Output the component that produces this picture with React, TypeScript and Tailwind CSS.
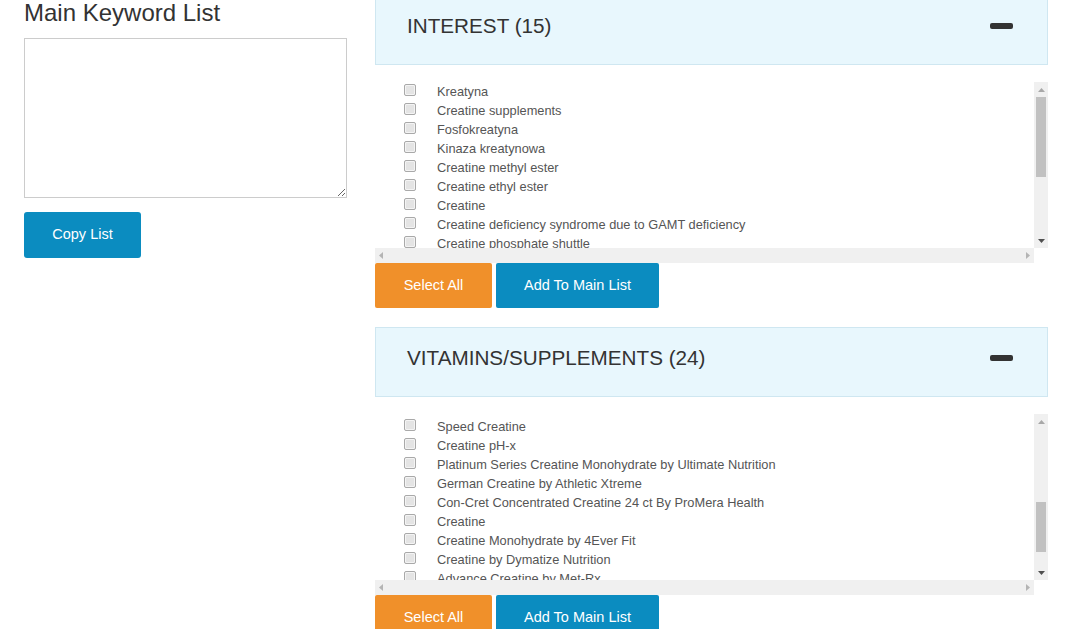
import React from 'react';

const interestItems = [
  'Kreatyna',
  'Creatine supplements',
  'Fosfokreatyna',
  'Kinaza kreatynowa',
  'Creatine methyl ester',
  'Creatine ethyl ester',
  'Creatine',
  'Creatine deficiency syndrome due to GAMT deficiency',
  'Creatine phosphate shuttle',
];

const vitaminItems = [
  'Speed Creatine',
  'Creatine pH-x',
  'Platinum Series Creatine Monohydrate by Ultimate Nutrition',
  'German Creatine by Athletic Xtreme',
  'Con-Cret Concentrated Creatine 24 ct By ProMera Health',
  'Creatine',
  'Creatine Monohydrate by 4Ever Fit',
  'Creatine by Dymatize Nutrition',
  'Advance Creatine by Met-Rx',
];

const font = { fontFamily: '"Liberation Sans", Arial, sans-serif' };

const Arrow: React.FC<{ dir: 'up' | 'down' | 'left' | 'right'; color: string }> = ({ dir, color }) => {
  const points = {
    up: '0,4 3.5,0 7,4',
    down: '0,0 7,0 3.5,4',
    left: '4,0 4,7 0,3.5',
    right: '0,0 0,7 4,3.5',
  }[dir];
  const horiz = dir === 'left' || dir === 'right';
  return (
    <svg width={horiz ? 4 : 7} height={horiz ? 7 : 4} viewBox={horiz ? '0 0 4 7' : '0 0 7 4'}>
      <polygon points={points} fill={color} />
    </svg>
  );
};

interface ListBoxProps {
  items: string[];
  thumbClass: string;
  offsetClass?: string;
}

const ListBox: React.FC<ListBoxProps> = ({ items, thumbClass, offsetClass = '' }) => (
  <div className="flex h-[181px] w-[673px] shrink-0">
    <div className="flex w-[659px] flex-col">
      {/* list */}
      <div className={`h-[166px] shrink-0 overflow-hidden bg-white ${offsetClass}`}>
        {items.map((item) => (
          <label key={item} className="flex h-[19px] items-center pl-[29px] text-[12.8px] text-[#555]">
            <span className="mb-[3px] box-border h-[12px] w-[12px] shrink-0 rounded-[2px] border border-[#a9a9a9] bg-[#e4e4e4] shadow-[inset_0_0_0_1px_#f4f4f4]" />
            <span className="ml-[21px] whitespace-nowrap">{item}</span>
          </label>
        ))}
      </div>
      {/* horizontal scrollbar */}
      <div className="flex h-[15px] shrink-0 items-center justify-between bg-[#f0f0f0] px-[4px]">
        <Arrow dir="left" color="#b4b4b4" />
        <Arrow dir="right" color="#b4b4b4" />
      </div>
    </div>
    <div className="flex w-[14px] flex-col">
      {/* vertical scrollbar */}
      <div className="flex h-[166px] shrink-0 flex-col bg-[#f0f0f0]">
        <div className="flex h-[15px] items-center justify-center">
          <Arrow dir="up" color="#a8a8a8" />
        </div>
        <div className="flex flex-1 flex-col">
          <div className={`mx-[2px] shrink-0 bg-[#c1c1c1] ${thumbClass}`} />
        </div>
        <div className="flex h-[15px] items-center justify-center">
          <Arrow dir="down" color="#505050" />
        </div>
      </div>
      <div className="flex-1 bg-white" />
    </div>
  </div>
);

const SectionHeader: React.FC<{ title: string }> = ({ title }) => (
  <div className="box-border flex h-[70px] shrink-0 items-center justify-between border border-[#cfe7f1] bg-[#e8f7fd] pb-[9px] pl-[31px] pr-[34px]">
    <h2 className="text-[20.7px] leading-[26px] text-[#333]">{title}</h2>
    <span className="h-[6px] w-[23px] rounded-[2px] bg-[#333]" />
  </div>
);

const ButtonRow: React.FC = () => (
  <div className="flex shrink-0 gap-[4px]">
    <button className="h-[45px] w-[117px] rounded-[2px] bg-[#f0902a] text-[14.5px] text-white">Select All</button>
    <button className="h-[45px] w-[163px] rounded-[2px] bg-[#0b8cc0] text-[14.5px] text-white">Add To Main List</button>
  </div>
);

export default function App() {
  return (
    <div className="flex h-[629px] w-[1080px] items-start overflow-hidden bg-white" style={font}>
      {/* left column */}
      <div className="ml-[24px] flex w-[323px] shrink-0 flex-col">
        <h1 className="text-[24px] leading-[26px] text-[#333]">Main Keyword List</h1>
        <textarea className="mt-[12px] box-border h-[160px] w-[323px] border border-[#cccccc] bg-white" />
        <button className="mt-[14px] h-[46px] w-[117px] rounded-[3px] bg-[#0b8cc0] text-[14.5px] text-white">
          Copy List
        </button>
      </div>

      {/* right column */}
      <div className="ml-[28px] -mt-[5px] flex w-[673px] shrink-0 flex-col">
        <SectionHeader title="INTEREST (15)" />
        <div className="mt-[17px] shrink-0">
          <ListBox items={interestItems} thumbClass="mt-0 h-[80px]" />
        </div>
        <ButtonRow />

        <div className="mt-[19px] shrink-0">
          <SectionHeader title="VITAMINS/SUPPLEMENTS (24)" />
        </div>
        <div className="mt-[17px] shrink-0">
          <ListBox items={vitaminItems} thumbClass="mt-[73px] h-[50px]" offsetClass="pt-[3px]" />
        </div>
        <ButtonRow />
      </div>
    </div>
  );
}
